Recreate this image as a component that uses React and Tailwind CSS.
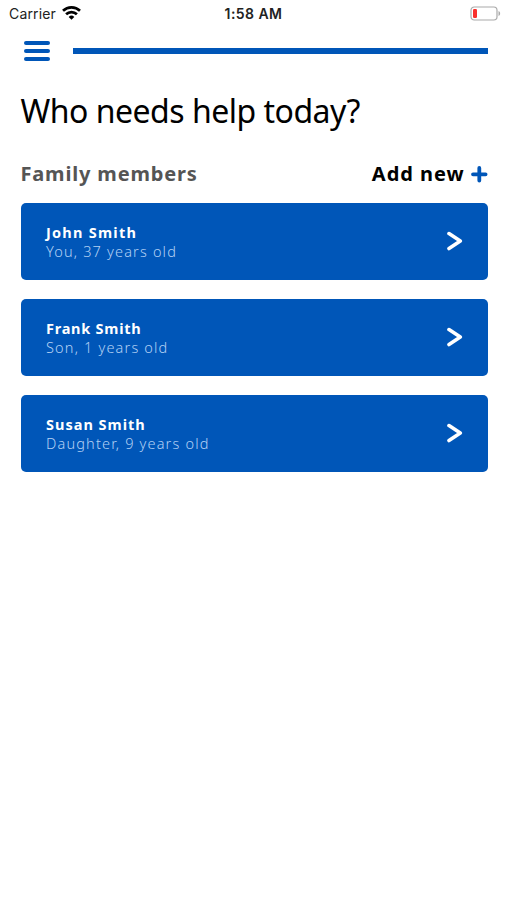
const members = [
  { name: "John Smith", relation: "You", age: 37, spacing: "tracking-[1.25px]" },
  { name: "Frank Smith", relation: "Son", age: 1, spacing: "tracking-[0.75px]" },
  { name: "Susan Smith", relation: "Daughter", age: 9, spacing: "tracking-[1px]" },
];

const StatusBar = () => (
  <div className="grid h-[27px] grid-cols-3 items-center pl-[9px] pr-[6px] font-['Inter',sans-serif] text-[#222]">
    <div className="flex items-center gap-[6px]">
      <span className="text-[14px] leading-none tracking-[0.15px]">Carrier</span>
      <svg className="-mt-[2px]" width="19" height="14" viewBox="0 0 19 14" fill="none" stroke="#000" strokeWidth="2.7">
        <path d="M1 4.8a12.3 12.3 0 0 1 17 0" />
        <path d="M4.1 8.3a7.7 7.7 0 0 1 10.8 0" />
        <path d="M6.7 10.9a4 4 0 0 1 5.6 0L9.5 13.8z" fill="#000" stroke="none" />
      </svg>
    </div>
    <span className="-ml-[3px] mt-px whitespace-nowrap text-center text-[14px] font-semibold leading-none tracking-[0.45px]">1:58 AM</span>
    <svg className="justify-self-end" width="31" height="15" viewBox="0 0 31 15" fill="none">
      <rect x="1" y="1" width="26" height="13" rx="3.2" stroke="#aaa" strokeWidth="1.2" />
      <rect x="3" y="3" width="4" height="9" rx="1.2" fill="#f9302c" />
      <path d="M28.5 5v5c2.2-1 2.2-4 0-5z" fill="#aaa" />
    </svg>
  </div>
);

const Header = () => (
  <header className="flex h-[48px] items-center pl-[24px] pr-[19.5px]">
    <button aria-label="Menu" className="flex w-[25.5px] flex-col gap-[4px]">
      <span className="h-[4px] rounded-full bg-[#0056b8]" />
      <span className="h-[4px] rounded-full bg-[#0056b8]" />
      <span className="h-[4px] rounded-full bg-[#0056b8]" />
    </button>
    <div className="-mt-[1px] ml-[23.5px] h-[6px] flex-1 bg-[#0056b8]" />
  </header>
);

const MemberCard = ({ name, relation, age, spacing }) => (
  <button className="flex h-[77.5px] w-full items-center justify-between rounded-[5px] bg-[#0056b8] pl-[25.5px] pr-[25px] text-left">
    <div className="pt-[1.5px]">
      <p className={`text-[14.5px] font-bold leading-[19px] text-white ${spacing}`}>{name}</p>
      <p className="text-[14.5px] font-light leading-[19px] tracking-[1.17px] text-[#b4d1f4]">
        {relation}, {age} years old
      </p>
    </div>
    <svg width="17" height="20" viewBox="0 0 17 20" fill="none" stroke="#fff" strokeWidth="3.6" strokeLinecap="round" strokeLinejoin="round">
      <path d="M3 2.6l11.3 7.5L3 17.6" />
    </svg>
  </button>
);

const App = () => {
  return (
    <div className="h-[900px] w-[507px] bg-white font-['Noto_Sans',sans-serif]">
      <StatusBar />
      <Header />
      <main className="pl-[20.5px] pr-[19.5px]">
        <h1 className="mt-[13.5px] whitespace-nowrap text-[32px] leading-[44px] tracking-[-0.5px] text-black">Who needs help today?</h1>
        <div className="mt-[28.5px] flex h-[26px] items-center justify-between">
          <h2 className="text-[20px] font-bold leading-[26px] tracking-[0.83px] text-[#555]">Family members</h2>
          <button className="flex items-center gap-[6px] text-[20px] font-bold leading-[26px] tracking-[0.95px] text-black">
            Add new
            <svg width="17" height="17" viewBox="0 0 17 17" stroke="#0056b8" strokeWidth="3.8" strokeLinecap="round">
              <path d="M8.3 2v12.6M2 8.3h12.6" />
            </svg>
          </button>
        </div>
        <div className="mt-[15.7px] flex flex-col gap-[18.5px]">
          {members.map((member) => (
            <MemberCard key={member.name} {...member} />
          ))}
        </div>
      </main>
    </div>
  );
};

export default App;
